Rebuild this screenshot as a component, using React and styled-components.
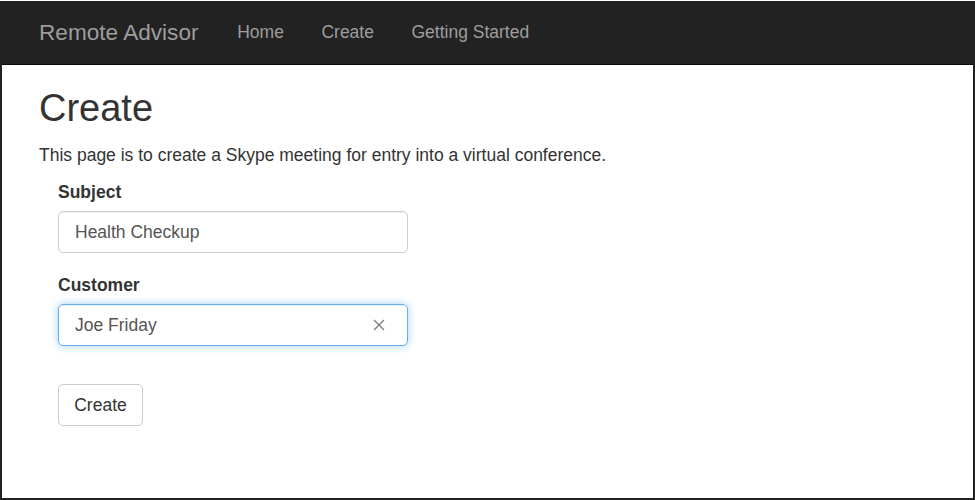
import React from "react";
import styled, { createGlobalStyle } from "styled-components";

const Global = createGlobalStyle`
  html, body { margin: 0; padding: 0; background: #fff; }
  body { font-family: "Liberation Sans", Arial, sans-serif; color: #333; }
  * { box-sizing: border-box; }
`;

const Frame = styled.div`
  width: 975px;
  height: 499px;
  margin-top: 1px;
  border-left: 2px solid #222;
  border-right: 2px solid #222;
  border-bottom: 2px solid #222;
  background: #fff;
  overflow: hidden;
`;

const Navbar = styled.nav`
  height: 64px;
  background: #222;
  border-bottom: 1px solid #080808;
  display: flex;
  align-items: center;
  padding-left: 37px;
`;

const Brand = styled.a`
  font-size: 22.6px;
  color: #9d9d9d;
  text-decoration: none;
  padding-right: 20px;
`;

const NavLink = styled.a`
  font-size: 17.5px;
  color: #9d9d9d;
  text-decoration: none;
  padding: 0 18.75px;
`;

const Content = styled.main`
  padding: 0 37px;
`;

const Title = styled.h2`
  font-size: 38px;
  font-weight: 500;
  line-height: 1.1;
  margin: 23px 0 13px;
  color: #333;
`;

const Lead = styled.p`
  font-size: 17.5px;
  line-height: 25px;
  margin: 0 0 12.5px;
`;

const Form = styled.form`
  padding-left: 19px;
  display: flex;
  flex-direction: column;
  align-items: flex-start;
`;

const Group = styled.div`
  margin-bottom: 20px;
`;

const Label = styled.label`
  display: block;
  font-size: 17.5px;
  font-weight: 700;
  line-height: 25px;
  margin-bottom: 6px;
`;

const Field = styled.div`
  width: 350px;
  height: 42px;
  border: 1px solid ${(p) => (p.$focus ? "#66afe9" : "#ccc")};
  border-radius: 5px;
  box-shadow: inset 0 1px 1px rgba(0, 0, 0, 0.075)
    ${(p) => (p.$focus ? ", 0 0 8px rgba(102, 175, 233, 0.6)" : "")};
  display: flex;
  align-items: center;
  padding: 0 16px;
  font-size: 17.5px;
  color: #555;
  line-height: 40px;
`;

const Value = styled.span`
  flex: 1;
  margin-top: -1px;
`;

const Clear = styled.svg`
  width: 12px;
  height: 12px;
  margin-right: 6px;
  margin-top: -1px;
`;

const Button = styled.button`
  margin-top: 18px;
  width: 85px;
  height: 42px;
  background: #fff;
  border: 1px solid #ccc;
  border-radius: 5px;
  font-family: "Liberation Sans", Arial, sans-serif;
  font-size: 17.5px;
  color: #333;
  padding: 0;
`;

export default function App() {
  return (
    <>
      <Global />
      <Frame>
        <Navbar>
          <Brand href="#">Remote Advisor</Brand>
          <NavLink href="#">Home</NavLink>
          <NavLink href="#">Create</NavLink>
          <NavLink href="#">Getting Started</NavLink>
        </Navbar>
        <Content>
          <Title>Create</Title>
          <Lead>This page is to create a Skype meeting for entry into a virtual conference.</Lead>
          <Form onSubmit={(e) => e.preventDefault()}>
            <Group>
              <Label>Subject</Label>
              <Field>
                <Value>Health Checkup</Value>
              </Field>
            </Group>
            <Group>
              <Label>Customer</Label>
              <Field $focus>
                <Value>Joe Friday</Value>
                <Clear viewBox="0 0 12 12">
                  <path d="M1 1 L11 11 M11 1 L1 11" stroke="#777" strokeWidth="1.2" fill="none" />
                </Clear>
              </Field>
            </Group>
            <Button type="button">Create</Button>
          </Form>
        </Content>
      </Frame>
    </>
  );
}
